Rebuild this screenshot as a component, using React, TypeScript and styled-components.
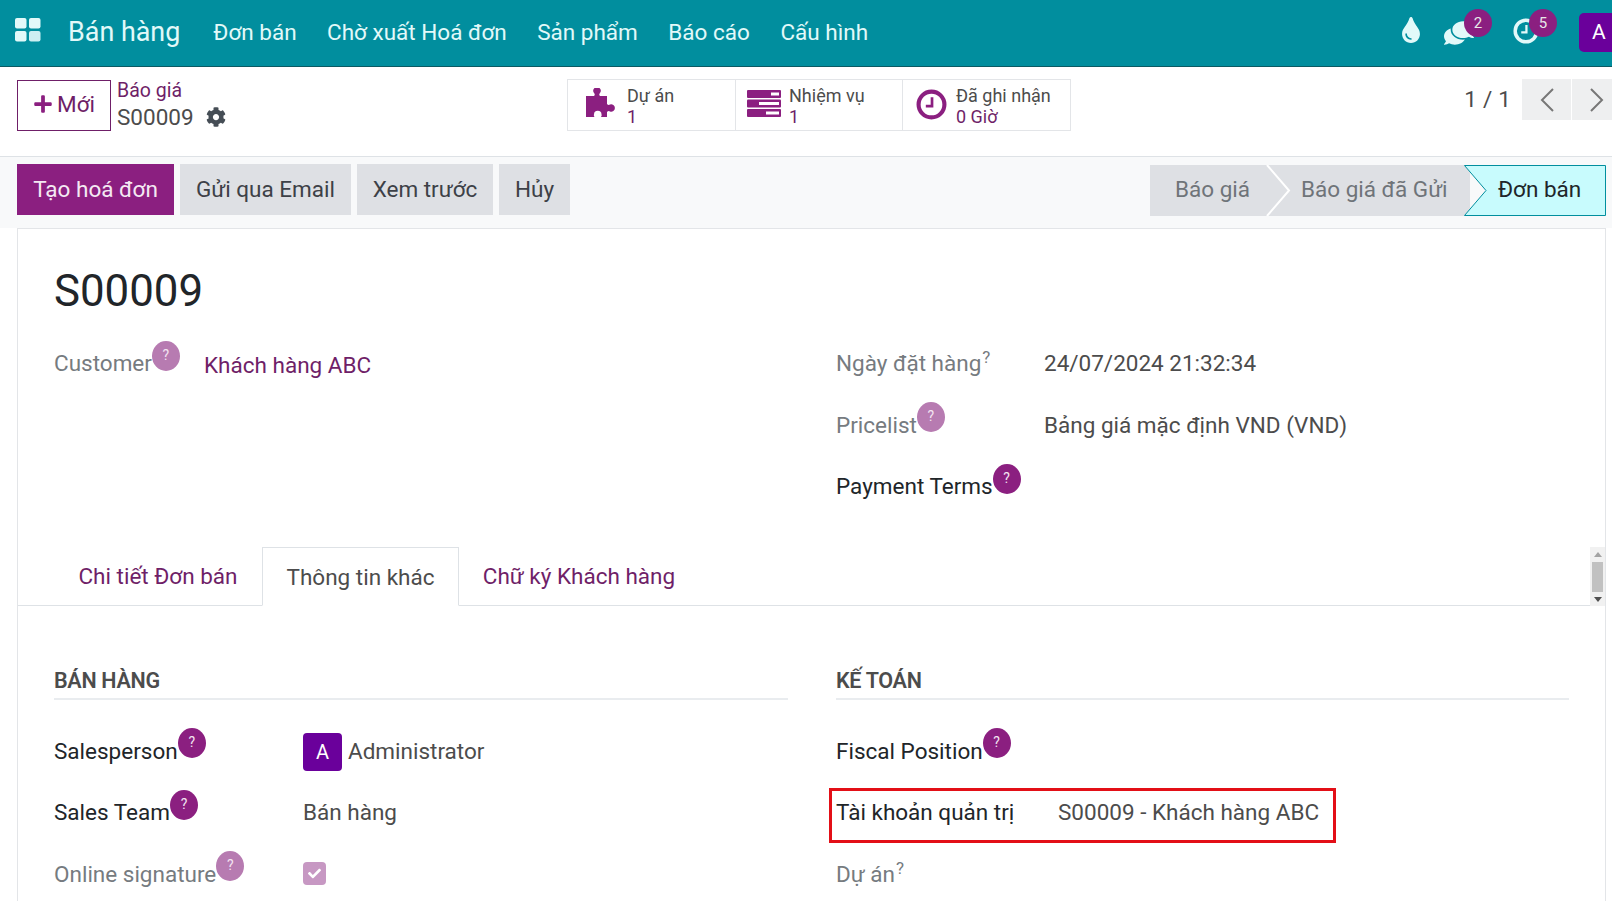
import React from 'react';
import styled, { createGlobalStyle } from 'styled-components';
import { FaCog, FaPlus, FaTint, FaComments, FaCheck } from 'react-icons/fa';

const Global = createGlobalStyle`
  html, body { margin: 0; padding: 0; height: 100%; overflow: hidden; background: #fff; }
  body { font-family: Roboto, "Noto Sans", sans-serif; font-size: 22.5px; color: #4c4c4c; }
  * { box-sizing: border-box; }
`;

const PURPLE = '#8b1f80';
const LINK = '#6f1f68';

const Page = styled.div`
  width: 1612px; height: 901px; overflow: hidden; display: flex; flex-direction: column;
`;
const Navbar = styled.header`
  height: 67px; flex: none; background: #018e9e; border-bottom: 1px solid #0b5a63;
  display: flex; align-items: center; padding-left: 15px; color: #e2f9f9;
`;
const AppsIcon = styled.svg`
  width: 26px; height: 24px; margin-right: 27px; margin-top: -6px;
`;
const Brand = styled.span`
  font-size: 26.9px; margin-right: 33px; margin-top: -2px;
`;
const NavItem = styled.span`
  font-size: 22.5px; margin-right: 30.5px; white-space: nowrap; margin-top: -2px;
`;
const NavRight = styled.div`
  margin-left: auto; display: flex; align-items: center; height: 100%; position: relative; width: 214px;
`;
const Systray = styled.span<{ $w: number; $up?: number }>`
  position: relative; width: ${p => p.$w}px; height: 26px; display: flex; align-items: center; font-size: 22px;
  margin-top: ${p => p.$up ?? 0}px;
`;
const NavClock = styled.span`
  display: flex; margin-top: -4px;
`;
const Count = styled.span<{ $left: number }>`
  position: absolute; top: -11px; left: ${p => p.$left}px; width: 28px; height: 28px; border-radius: 50%;
  background: ${PURPLE}; color: #e8e8e8; font-size: 15px; display: flex; align-items: center; justify-content: center;
`;
const TopAvatar = styled.span`
  position: absolute; left: 181px; top: 13px; width: 40px; height: 39px; border-radius: 5px;
  background: #6a009b; color: #fff; font-size: 21px; padding-left: 13px; line-height: 39px;
`;

const ControlPanel = styled.section`
  height: 90px; flex: none; background: #fff; border-bottom: 1px solid #dee2e6; position: relative;
  display: grid; grid-template-columns: 550px 504px 1fr; padding: 12px 0 0 17px;
`;
const LeftCp = styled.div`
  display: flex; align-items: flex-start; gap: 6px; padding-top: 1px;
`;
const NewButton = styled.button`
  width: 94px; height: 51px; border: 1px solid ${LINK}; background: #fff; color: ${LINK}; font: 400 22.5px Roboto, sans-serif;
  display: flex; align-items: center; justify-content: center; gap: 4px; padding: 0 0 4px;
  svg { font-size: 20px; color: ${PURPLE}; }
`;
const Crumbs = styled.div`
  display: flex; flex-direction: column; margin-top: -3px;
`;
const CrumbLink = styled.span`
  color: ${LINK}; font-size: 19.5px; line-height: 27px;
`;
const CrumbCurrent = styled.span`
  font-size: 22.5px; line-height: 26px; display: flex; align-items: center; gap: 12px; color: #4c4c4c;
  svg { font-size: 20px; color: #454d55; }
`;
const Stats = styled.div`
  display: flex; height: 52px; border: 1px solid #e3e5e8; width: 504px;
`;
const Stat = styled.div<{ $w: number; $pad: number; $gap: number; $up: number }>`
  width: ${p => p.$w}px; display: flex; align-items: center; padding-left: ${p => p.$pad}px; gap: ${p => p.$gap}px;
  border-right: 1px solid #e3e5e8; flex: none;
  &:last-child { border-right: none; }
  svg { flex: none; margin-top: ${p => p.$up}px; }
`;
const StatText = styled.div`
  display: flex; flex-direction: column; font-size: 18px; line-height: 21px; color: #4c4c4c; padding-top: 2px;
  b { font-weight: 400; color: ${LINK}; }
`;
const Pager = styled.div`
  display: flex; align-items: flex-start; justify-content: flex-end; height: 42px;
`;
const PagerText = styled.span`
  font-size: 22.5px; line-height: 40px; margin-right: 10px; color: #4c4c4c; letter-spacing: .2px;
`;
const PagerBtn = styled.span<{ $w: number; $pad?: number }>`
  width: ${p => p.$w}px; height: 41px; background: #eeeff0; margin-left: 1px; display: flex; align-items: center;
  justify-content: center; padding-left: ${p => p.$pad ?? 0}px;
`;

const ActionBar = styled.section`
  height: 71px; flex: none; background: #f8f9fa; padding: 7px 6px 0 17px; display: flex; gap: 6px; position: relative;
`;
const ActionBtn = styled.button<{ $w: number; $primary?: boolean }>`
  width: ${p => p.$w}px; height: 51px; border: 0; font: 400 22.5px Roboto, sans-serif;
  background: ${p => (p.$primary ? PURPLE : '#dee0e4')}; color: ${p => (p.$primary ? '#f4e9f3' : '#3d4147')};
  padding: 0 0 2px; white-space: nowrap;
`;
const StatusBar = styled.div`
  margin-left: auto; display: flex; height: 51px; margin-top: 1px; position: relative; width: 456px;
`;
const StatusShape = styled.svg`
  position: absolute; inset: 0; width: 456px; height: 51px;
`;
const StatusLabel = styled.span<{ $w: number; $pad: number; $active?: boolean }>`
  position: relative; width: ${p => p.$w}px; flex: none; line-height: 49px; font-size: 22.5px; text-align: left;
  padding-left: ${p => p.$pad}px; white-space: nowrap;
  color: ${p => (p.$active ? '#212529' : '#6f7479')};
`;

const Sheet = styled.main`
  flex: 1; min-height: 0; margin: 0 6px 0 17px; background: #fff; border: 1px solid #e3e5e8; border-bottom: 0;
  display: flex; flex-direction: column;
`;
const Title = styled.h1`
  font: 400 43.8px/50px Roboto, sans-serif; color: #212529; margin: 0; padding: 37px 0 0 36px; height: 87px; flex: none;
`;
const TopGroups = styled.div`
  display: grid; grid-template-columns: 782px 1fr; height: 231px; flex: none; padding: 15px 0 0 36px;
`;
const FieldColumn = styled.div`
  display: flex; flex-direction: column;
`;
const Field = styled.div<{ $label: number; $top?: boolean }>`
  display: grid; grid-template-columns: ${p => p.$label}px 1fr; height: 61.5px;
  align-items: ${p => (p.$top ? 'flex-start' : 'center')}; padding-top: ${p => (p.$top ? 17 : 0)}px;
`;
const Label = styled.span<{ $strong?: boolean }>`
  display: inline-flex; align-items: center; font-size: 22.5px; white-space: nowrap; line-height: 30px;
  color: ${p => (p.$strong ? '#212529' : '#767b80')};
`;
const Help = styled.span<{ $muted?: boolean }>`
  width: 28px; height: 30px; border-radius: 50%; margin-top: -15px; flex: none; display: inline-flex;
  align-items: center; justify-content: center; font-size: 14px; color: #f3e4f1; padding-bottom: 2px;
  background: ${p => (p.$muted ? '#b77bb1' : PURPLE)};
`;
const Sup = styled.span`
  display: block; font-size: 17px; line-height: 20px; margin-top: -12px; margin-left: 1px;
`;
const Value = styled.span<{ $link?: boolean; $low?: boolean }>`
  font-size: 22.5px; white-space: nowrap; line-height: 30px; color: ${p => (p.$link ? LINK : '#4c4c4c')};
  display: flex; align-items: center; margin-top: ${p => (p.$low ? 2 : 0)}px;
`;
const Tabs = styled.nav`
  height: 59px; flex: none; display: flex; align-items: stretch; border-bottom: 1px solid #dee2e6; position: relative; padding-left: 36px;
`;
const Tab = styled.span<{ $w: number; $active?: boolean }>`
  width: ${p => p.$w}px; display: flex; align-items: center; justify-content: center; font-size: 22.5px; flex: none;
  color: ${p => (p.$active ? '#4c4c4c' : LINK)};
  ${p => (p.$active ? 'background: #fff; margin-bottom: -1px; border: 1px solid #dee2e6; border-bottom-color: #fff;' : '')}
`;
const ScrollTrack = styled.div`
  position: absolute; right: 0; top: 0; bottom: -1px; width: 15px; background: #f1f1f1;
  display: flex; flex-direction: column; align-items: center; justify-content: space-between; padding: 5px 0 4px;
`;
const ScrollThumb = styled.div`
  position: absolute; left: 2px; right: 2px; top: 15px; height: 30px; background: #c1c1c1;
`;
const Arrow = styled.span<{ $down?: boolean }>`
  width: 0; height: 0; border-left: 4px solid transparent; border-right: 4px solid transparent;
  ${p => (p.$down ? 'border-top: 5px solid #505050;' : 'border-bottom: 5px solid #a3a3a3;')}
`;
const LowerGroups = styled.div`
  display: grid; grid-template-columns: 734px 733px; column-gap: 48px; padding: 58px 0 0 36px;
`;
const SectionTitle = styled.h2`
  margin: 0 0 20px; font: 600 21.5px/33px Roboto, sans-serif; color: #4c4c4c; height: 36px; border-bottom: 2px solid #e9ecef;
  letter-spacing: -.3px; text-transform: uppercase;
`;
const Avatar = styled.span`
  width: 39px; height: 38px; border-radius: 4px; background: #6a009b; color: #fff; font-size: 20px;
  display: inline-flex; align-items: center; justify-content: center; margin-right: 6px; margin-top: 3px;
`;
const Check = styled.span`
  width: 23px; height: 23px; border-radius: 4px; background: #c798c3; color: #fff; font-size: 13px;
  display: inline-flex; align-items: center; justify-content: center;
`;
const Highlight = styled.div`
  position: relative;
`;
const RedBox = styled.div`
  position: absolute; left: -7px; top: 6px; width: 507px; height: 55px; border: 3px solid #e30f17; pointer-events: none;
`;

const ClockIcon = ({ size, color }: { size: number; color: string }) => (
  <svg width={size} height={size} viewBox="0 0 30 30" fill="none">
    <circle cx="15" cy="15" r="12.5" stroke={color} strokeWidth="4" />
    <path d="M15.5 8v8.5H9.5" stroke={color} strokeWidth="2.6" />
  </svg>
);
const Chevron = ({ dir }: { dir: 'l' | 'r' }) => (
  <svg width="14" height="24" viewBox="0 0 14 24" fill="none">
    <path d={dir === 'l' ? 'M13 1 2 12l11 11' : 'M1 1l11 11L1 23'} stroke="#777" strokeWidth="2" />
  </svg>
);
const PuzzleIcon = () => (
  <svg width="32" height="29" viewBox="0 0 32 29" fill={PURPLE}>
    <path d="M0 8H8Q9.5 6.5 8 5A3.7 3.7 0 1 1 14 5Q12.5 6.5 14 8H21V16Q22.5 17.5 24 16.5A3.7 3.7 0 1 1 24 23.5Q22.5 22.5 21 24V29H15Q16 27.5 15.5 26.5A3.7 3.7 0 1 0 8 26.5Q7.5 27.5 8.5 29H0Z" />
  </svg>
);
const TaskBars = () => (
  <svg width="34" height="27" viewBox="0 0 34 27">
    <rect y="0" width="34" height="8" rx="1" fill={PURPLE} />
    <rect y="9.5" width="34" height="8" rx="1" fill={PURPLE} />
    <rect y="19" width="34" height="8" rx="1" fill={PURPLE} />
    <rect x="24" y="2.5" width="8" height="3" fill="#fff" />
    <rect x="12" y="12" width="20" height="3" fill="#fff" />
    <rect x="19" y="21.5" width="13" height="3" fill="#fff" />
  </svg>
);

export default function App() {
  return (
    <Page>
      <Global />
      <Navbar>
        <AppsIcon viewBox="0 0 26 24">
          <rect x="0" y="0" width="11.5" height="10.5" rx="2" fill="#e2f9f9" />
          <rect x="14" y="0" width="11.5" height="10.5" rx="2" fill="#e2f9f9" />
          <rect x="0" y="13" width="11.5" height="10.5" rx="2" fill="#e2f9f9" />
          <rect x="14" y="13" width="11.5" height="10.5" rx="2" fill="#cdeff2" />
        </AppsIcon>
        <Brand>Bán hàng</Brand>
        <NavItem>Đơn bán</NavItem>
        <NavItem>Chờ xuất Hoá đơn</NavItem>
        <NavItem>Sản phẩm</NavItem>
        <NavItem>Báo cáo</NavItem>
        <NavItem>Cấu hình</NavItem>
        <NavRight>
          <Systray $w={46} $up={-6}><FaTint size={26} /></Systray>
          <Systray $w={69}><FaComments size={30} style={{ transform: 'scaleX(-1)' }} /><Count $left={20}>2</Count></Systray>
          <Systray $w={60}><NavClock><ClockIcon size={26} color="#e2f9f9" /></NavClock><Count $left={16}>5</Count></Systray>
          <TopAvatar>A</TopAvatar>
        </NavRight>
      </Navbar>
      <ControlPanel>
        <LeftCp>
          <NewButton><FaPlus />Mới</NewButton>
          <Crumbs>
            <CrumbLink>Báo giá</CrumbLink>
            <CrumbCurrent>S00009 <FaCog /></CrumbCurrent>
          </Crumbs>
        </LeftCp>
        <Stats>
          <Stat $w={168} $pad={18} $gap={9} $up={-6}><PuzzleIcon /><StatText>Dự án<b>1</b></StatText></Stat>
          <Stat $w={167} $pad={11} $gap={8} $up={-4}><TaskBars /><StatText>Nhiệm vụ<b>1</b></StatText></Stat>
          <Stat $w={167} $pad={13} $gap={9} $up={-2}><ClockIcon size={31} color={PURPLE} /><StatText>Đã ghi nhận<b>0 Giờ</b></StatText></Stat>
        </Stats>
        <Pager>
          <PagerText>1 / 1</PagerText>
          <PagerBtn $w={49}><Chevron dir="l" /></PagerBtn>
          <PagerBtn $w={40} $pad={10}><Chevron dir="r" /></PagerBtn>
        </Pager>
      </ControlPanel>
      <ActionBar>
        <ActionBtn $w={157} $primary>Tạo hoá đơn</ActionBtn>
        <ActionBtn $w={171}>Gửi qua Email</ActionBtn>
        <ActionBtn $w={136}>Xem trước</ActionBtn>
        <ActionBtn $w={71}>Hủy</ActionBtn>
        <StatusBar>
          <StatusShape viewBox="0 0 456 51">
            <rect x="0" y="0" width="320" height="51" fill="#dee0e4" />
            <path d="M117 0 139 25.5 117 51" fill="none" stroke="#fff" strokeWidth="2" />
            <path d="M314.5 .5H455.5V50.5H314.5L336 25.5Z" fill="#c8fbfd" stroke="#018e9e" />
          </StatusShape>
          <StatusLabel $w={126} $pad={25}>Báo giá</StatusLabel>
          <StatusLabel $w={213} $pad={25}>Báo giá đã Gửi</StatusLabel>
          <StatusLabel $w={117} $pad={9} $active>Đơn bán</StatusLabel>
        </StatusBar>
      </ActionBar>
      <Sheet>
        <Title>S00009</Title>
        <TopGroups>
          <FieldColumn>
            <Field $label={150} $top>
              <Label>Customer<Help $muted>?</Help></Label>
              <Value $link $low>Khách hàng ABC</Value>
            </Field>
          </FieldColumn>
          <FieldColumn>
            <Field $label={208} $top>
              <Label>Ngày đặt hàng<Sup>?</Sup></Label>
              <Value>24/07/2024 21:32:34</Value>
            </Field>
            <Field $label={208} $top>
              <Label>Pricelist<Help $muted>?</Help></Label>
              <Value>Bảng giá mặc định VND (VND)</Value>
            </Field>
            <Field $label={208} $top>
              <Label $strong>Payment Terms<Help>?</Help></Label>
            </Field>
          </FieldColumn>
        </TopGroups>
        <Tabs>
          <Tab $w={208}>Chi tiết Đơn bán</Tab>
          <Tab $w={197} $active>Thông tin khác</Tab>
          <Tab $w={240}>Chữ ký Khách hàng</Tab>
          <ScrollTrack><Arrow /><ScrollThumb /><Arrow $down /></ScrollTrack>
        </Tabs>
        <LowerGroups>
          <div>
            <SectionTitle>Bán hàng</SectionTitle>
            <Field $label={249}>
              <Label $strong>Salesperson<Help>?</Help></Label>
              <Value><Avatar>A</Avatar>Administrator</Value>
            </Field>
            <Field $label={249}>
              <Label $strong>Sales Team<Help>?</Help></Label>
              <Value>Bán hàng</Value>
            </Field>
            <Field $label={249}>
              <Label>Online signature<Help $muted>?</Help></Label>
              <Value><Check><FaCheck /></Check></Value>
            </Field>
          </div>
          <div>
            <SectionTitle>Kế toán</SectionTitle>
            <Field $label={222}>
              <Label $strong>Fiscal Position<Help>?</Help></Label>
            </Field>
            <Highlight>
              <Field $label={222}>
                <Label $strong>Tài khoản quản trị</Label>
                <Value>S00009 - Khách hàng ABC</Value>
              </Field>
              <RedBox />
            </Highlight>
            <Field $label={222}>
              <Label>Dự án<Sup>?</Sup></Label>
            </Field>
          </div>
        </LowerGroups>
      </Sheet>
    </Page>
  );
}
